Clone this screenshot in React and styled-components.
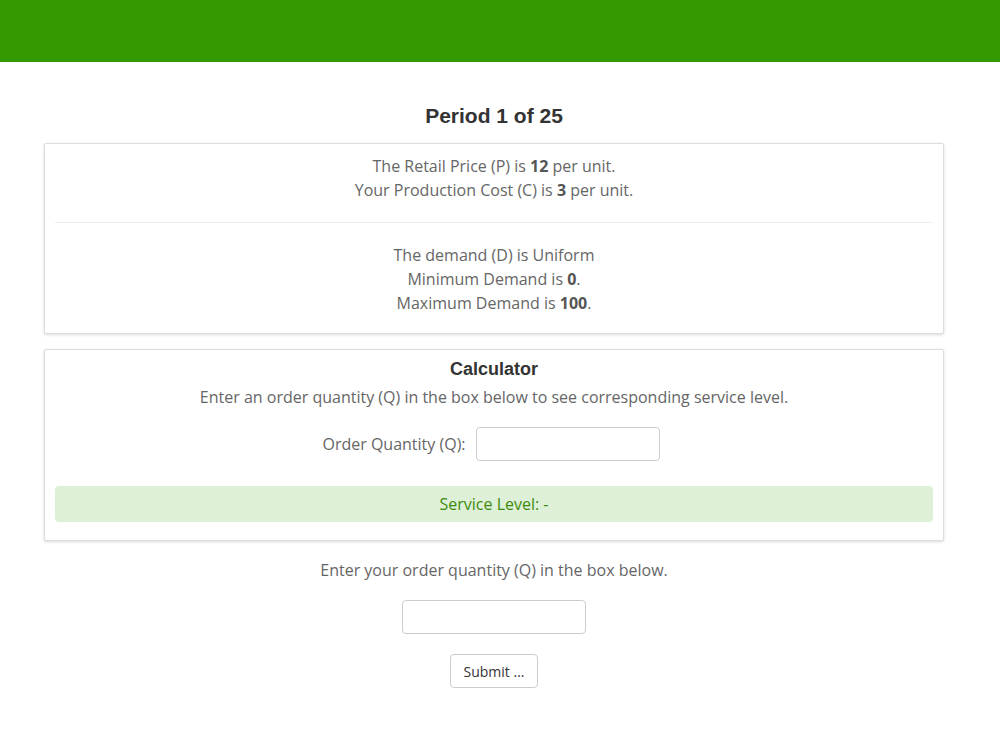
import styled, { createGlobalStyle } from "styled-components";

const GlobalStyle = createGlobalStyle`
  html, body {
    margin: 0;
    padding: 0;
    background: #fff;
  }
  body {
    font-family: "Open Sans", "Liberation Sans", sans-serif;
    font-size: 16px;
    line-height: 24px;
    color: #666;
  }
`;

// Шапка
const TopBar = styled.div`
  height: 62px;
  background: #339900;
`;

const Container = styled.div`
  width: 900px;
  margin: 0 0 0 44px;
  padding-top: 41px;
  text-align: center;
`;

const Title = styled.h2`
  margin: 0 0 14px 0;
  font-family: "Liberation Sans", Arial, sans-serif;
  font-size: 21px;
  line-height: 26px;
  font-weight: 700;
  color: #333;
`;

const Panel = styled.div`
  border: 1px solid #ddd;
  border-radius: 2px;
  box-shadow: 0 1px 3px rgba(0, 0, 0, 0.15);
  background: #fff;
  padding: ${(p) => p.$pad || "10px"};
  margin-bottom: 15px;
`;

const Section = styled.div`
  padding: 0 0 ${(p) => p.$bottom || "0"} 0;
`;

const Divider = styled.hr`
  border: 0;
  border-top: 1px solid #eee;
  margin: 20px 0 20px 0;
`;

const Line = styled.div`
  line-height: 24px;
  margin-top: ${(p) => p.$top || "0"};
`;

const Bold = styled.b`
  font-weight: 700;
  color: #555;
`;

const CalcTitle = styled.h3`
  margin: 0;
  font-family: "Liberation Sans", Arial, sans-serif;
  font-size: 18px;
  line-height: 20px;
  font-weight: 700;
  color: #333;
`;

const Row = styled.div`
  display: flex;
  justify-content: center;
  align-items: center;
  gap: 10px;
  margin-top: ${(p) => p.$top || "0"};
  padding-right: 6px;
`;

const Label = styled.label`
  color: #666;
`;

const Input = styled.input`
  box-sizing: border-box;
  width: 184px;
  height: 34px;
  margin-top: ${(p) => p.$top || "0"};
  border: 1px solid #ccc;
  border-radius: 4px;
  padding: 6px 12px;
  font-family: inherit;
  font-size: 14px;
  outline: none;
`;

const Alert = styled.div`
  margin-top: 25px;
  height: 36px;
  line-height: 36px;
  background: #dff0d8;
  border-radius: 4px;
  color: #3c8c0c;
`;

const Below = styled.div`
  padding-top: 2px;
  display: flex;
  flex-direction: column;
  align-items: center;
`;

const Button = styled.button`
  margin-top: 20px;
  box-sizing: border-box;
  width: 88px;
  height: 34px;
  background: #fff;
  border: 1px solid #ccc;
  border-radius: 4px;
  font-family: "Open Sans", sans-serif;
  font-size: 14px;
  color: #333;
  cursor: pointer;
`;

export default function App() {
  return (
    <>
      <GlobalStyle />
      <TopBar />
      <Container>
        <Title>Period 1 of 25</Title>
        <Panel $pad="10px 10px 9px">
          <Section>
            <Line>
              The Retail Price (P) is <Bold>12</Bold> per unit.
            </Line>
            <Line>
              Your Production Cost (C) is <Bold>3</Bold> per unit.
            </Line>
          </Section>
          <Divider />
          <Section $bottom="9px">
            <Line>The demand (D) is Uniform</Line>
            <Line>
              Minimum Demand is <Bold>0</Bold>.
            </Line>
            <Line>
              Maximum Demand is <Bold>100</Bold>.
            </Line>
          </Section>
        </Panel>
        <Panel $pad="9px 10px 18px">
          <CalcTitle>Calculator</CalcTitle>
          <Line $top="6px">
            Enter an order quantity (Q) in the box below to see corresponding
            service level.
          </Line>
          <Row $top="18px">
            <Label>Order Quantity (Q):</Label>
            <Input type="text" />
          </Row>
          <Alert>Service Level: -</Alert>
        </Panel>
        <Below>
          <Line>Enter your order quantity (Q) in the box below.</Line>
          <Input type="text" $top="18px" />
          <Button>Submit ...</Button>
        </Below>
      </Container>
    </>
  );
}
